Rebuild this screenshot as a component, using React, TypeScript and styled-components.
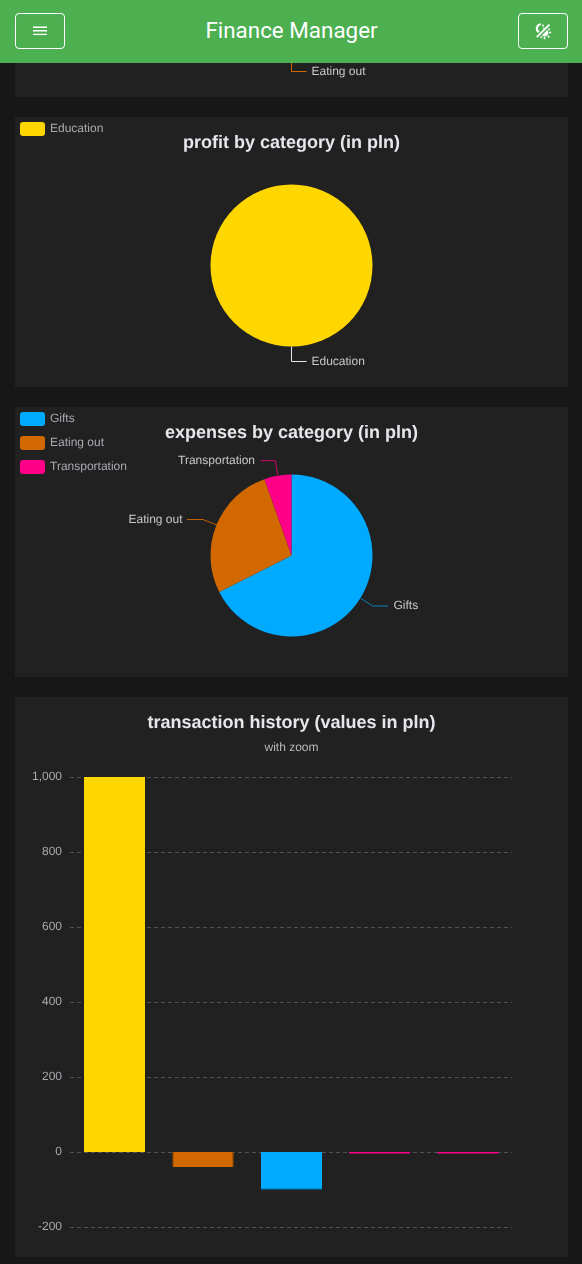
import React from "react";
import styled, { createGlobalStyle } from "styled-components";

const Global = createGlobalStyle`
  html, body { margin: 0; padding: 0; background: #171717; }
  body { overflow: hidden; height: 1264px; }
`;

const Page = styled.div`
  position: relative;
  width: 582px;
  height: 1264px;
  overflow: hidden;
  background: #171717;
`;

const Header = styled.header`
  position: absolute;
  top: 0;
  left: 0;
  right: 0;
  z-index: 2;
  height: 63px;
  box-sizing: border-box;
  padding: 0 14px 0 15px;
  display: flex;
  align-items: center;
  justify-content: space-between;
  background: #4caf50;
`;

const HeaderButton = styled.button`
  width: 50px;
  height: 36px;
  margin-bottom: 1px;
  padding: 0;
  display: flex;
  align-items: center;
  justify-content: center;
  background: transparent;
  border: 1px solid #fff;
  border-radius: 4px;
  color: #fff;
`;

const AppTitle = styled.h1`
  margin: 0 0 3px;
  font: 400 22.4px/28px Roboto, sans-serif;
  color: #fff;
`;

const Cards = styled.main`
  display: flex;
  flex-direction: column;
  gap: 20px;
  margin-top: -173px;
  padding: 0 14px 0 15px;
`;

const Card = styled.section<{ $height: number }>`
  position: relative;
  height: ${(p) => p.$height}px;
  background: #212121;
  overflow: hidden;
`;

const ChartTitle = styled.h2<{ $top: number }>`
  margin: 0;
  padding-top: ${(p) => p.$top}px;
  text-align: center;
  font: 700 18px/21px "Liberation Sans", Arial, sans-serif;
  text-rendering: geometricPrecision;
  color: #e6e6ec;
  will-change: opacity;
`;

const Subtitle = styled.div`
  margin-top: 7px;
  text-align: center;
  font: 400 12px/14px "Liberation Sans", Arial, sans-serif;
  text-rendering: geometricPrecision;
  color: #b8b8bd;
  will-change: opacity;
`;

const Legend = styled.ul`
  position: absolute;
  top: 5px;
  left: 5px;
  margin: 0;
  padding: 0;
  list-style: none;
  display: flex;
  flex-direction: column;
  gap: 10px;
  will-change: opacity;
`;

const LegendItem = styled.li`
  display: flex;
  align-items: flex-start;
  gap: 5px;
  height: 14px;
  font: 400 12px/12px "Liberation Sans", Arial, sans-serif;
  text-rendering: geometricPrecision;
  color: #a9a9b2;
`;

const Swatch = styled.span<{ $color: string }>`
  width: 25px;
  height: 14px;
  border-radius: 3px;
  background: ${(p) => p.$color};
`;

const ChartSvg = styled.svg`
  position: absolute;
  top: 0;
  left: 0;
  display: block;
  overflow: visible;
  pointer-events: none;
  will-change: opacity;
`;

const ChartText = styled.text`
  font: 400 12px "Liberation Sans", Arial, sans-serif;
  text-rendering: geometricPrecision;
  fill: #c8c8cd;
`;

const AxisText = styled.text`
  font: 400 12px "Liberation Sans", Arial, sans-serif;
  text-rendering: geometricPrecision;
  fill: #a9a9b0;
`;

const YELLOW = "#ffd700";
const ORANGE = "#d16900";
const BLUE = "#00aaff";
const PINK = "#ff0088";

const MenuIcon = () => (
  <svg width="14" height="10" viewBox="0 0 14 10" aria-hidden="true">
    <path d="M0 1.2H14M0 4.8H14M0 8.4H14" stroke="#fff" strokeWidth="1.4" fill="none" />
  </svg>
);

const ThemeIcon = () => (
  <svg width="18" height="18" viewBox="0 0 18 18" aria-hidden="true">
    <path d="M15.4 2.6 2.8 15.2" stroke="#fff" strokeWidth="1.9" fill="none" />
    <path d="M6.4 1.2A5.4 5.4 0 0 0 4 10.9L5.6 9.3A3.4 3.4 0 0 1 7 3Z" fill="#fff" />
    <circle cx="9" cy="3.6" r="1" fill="#fff" />
    <circle cx="9.9" cy="6.3" r="0.8" fill="#fff" />
    <path d="M13.2 8A3.6 3.6 0 0 1 8 13.2Z" fill="#fff" />
    <path
      d="M15 10.5H17.2M10.5 15V17.2M13.8 13.8 15.4 15.4M14.3 7.8 15.8 7M7.8 14.3 7 15.8"
      stroke="#fff"
      strokeWidth="1.6"
      fill="none"
    />
  </svg>
);

function polar(cx: number, cy: number, r: number, deg: number) {
  const a = (deg * Math.PI) / 180;
  return [cx + r * Math.sin(a), cy - r * Math.cos(a)];
}

function slicePath(cx: number, cy: number, r: number, from: number, to: number) {
  const [x1, y1] = polar(cx, cy, r, from);
  const [x2, y2] = polar(cx, cy, r, to);
  const large = to - from > 180 ? 1 : 0;
  return `M${cx} ${cy}L${x1} ${y1}A${r} ${r} 0 ${large} 1 ${x2} ${y2}Z`;
}

const CX = 276.5;
const CY = 148.5;
const R = 81;

const PieChart: React.FC<{ title: string; titleTop: number; children: React.ReactNode; legend: [string, string][] }> = ({
  title,
  titleTop,
  children,
  legend,
}) => (
  <Card $height={270}>
    <ChartTitle $top={titleTop}>{title}</ChartTitle>
    <ChartSvg width="553" height="270">
      {children}
    </ChartSvg>
    <Legend>
      {legend.map(([name, color]) => (
        <LegendItem key={name}>
          <Swatch $color={color} />
          {name}
        </LegendItem>
      ))}
    </Legend>
  </Card>
);

const ticks = [1000, 800, 600, 400, 200, 0, -200];
const bars: { x: number; value: number; color: string; edge?: string }[] = [
  { x: 69, value: 1000, color: YELLOW },
  { x: 157.5, value: -40, color: ORANGE, edge: "M158 455V470M218 455V470" },
  { x: 246, value: -100, color: BLUE, edge: "M246 492H307" },
  { x: 334, value: -4, color: PINK },
  { x: 422.5, value: -4, color: PINK },
];
const ZERO = 455;
const SCALE = 0.375;

const BarChart = () => (
  <Card $height={560}>
    <ChartTitle $top={15}>transaction history (values in pln)</ChartTitle>
    <Subtitle>with zoom</Subtitle>
    <ChartSvg width="553" height="560">
      {ticks.map((t) => {
        const y = ZERO - t * SCALE + 0.5;
        return (
          <g key={t}>
            <line x1="55" x2="497" y1={y} y2={y} stroke="#505055" strokeDasharray="4 3" />
            <AxisText x="47" y={y + 2.5} textAnchor="end">
              {t.toLocaleString("en-US")}
            </AxisText>
          </g>
        );
      })}
      {bars.map((b) => (
        <g key={b.x}>
          <rect
            x={b.x}
            y={b.value > 0 ? ZERO - b.value * SCALE : ZERO}
            width="61"
            height={Math.abs(b.value) * SCALE}
            fill={b.color}
          />
          {b.edge && <path d={b.edge} stroke="#000" strokeOpacity="0.35" fill="none" />}
        </g>
      ))}
    </ChartSvg>
  </Card>
);

export default function App() {
  return (
    <Page>
      <Global />
      <Header>
        <HeaderButton aria-label="menu">
          <MenuIcon />
        </HeaderButton>
        <AppTitle>Finance Manager</AppTitle>
        <HeaderButton aria-label="theme">
          <ThemeIcon />
        </HeaderButton>
      </Header>
      <Cards>
        <PieChart title="" titleTop={0} legend={[]}>
          <circle cx={CX} cy={CY} r={R} fill={ORANGE} />
          <path d="M276.5 229.5V244.5H291.5" stroke={ORANGE} fill="none" />
          <ChartText x="296.5" y="247.5">Eating out</ChartText>
        </PieChart>
        <PieChart title="profit by category (in pln)" titleTop={15} legend={[["Education", YELLOW]]}>
          <circle cx={CX} cy={CY} r={R} fill={YELLOW} />
          <path d="M276.5 229.5V244.5H291.5" stroke="#e8e8e8" fill="none" />
          <ChartText x="296.5" y="247.5">Education</ChartText>
        </PieChart>
        <PieChart
          title="expenses by category (in pln)"
          titleTop={15}
          legend={[
            ["Gifts", BLUE],
            ["Eating out", ORANGE],
            ["Transportation", PINK],
          ]}
        >
          <path d={slicePath(CX, CY, R, 0, 243.2)} fill={BLUE} />
          <path d={slicePath(CX, CY, R, 243.2, 340.5)} fill={ORANGE} />
          <path d={slicePath(CX, CY, R, 340.5, 360)} fill={PINK} />
          <path d="M345.7 191.3 357.7 199H373" stroke="#0b80bb" fill="none" />
          <path d="M202 118 188 112.5H172" stroke="#c06000" fill="none" />
          <path d="M262.7 68 260.3 53.7H245.7" stroke="#d00070" fill="none" />
          <ChartText x="378.5" y="201.5">Gifts</ChartText>
          <ChartText x="167.5" y="116" textAnchor="end">Eating out</ChartText>
          <ChartText x="240" y="57" textAnchor="end">Transportation</ChartText>
        </PieChart>
        <BarChart />
      </Cards>
    </Page>
  );
}
